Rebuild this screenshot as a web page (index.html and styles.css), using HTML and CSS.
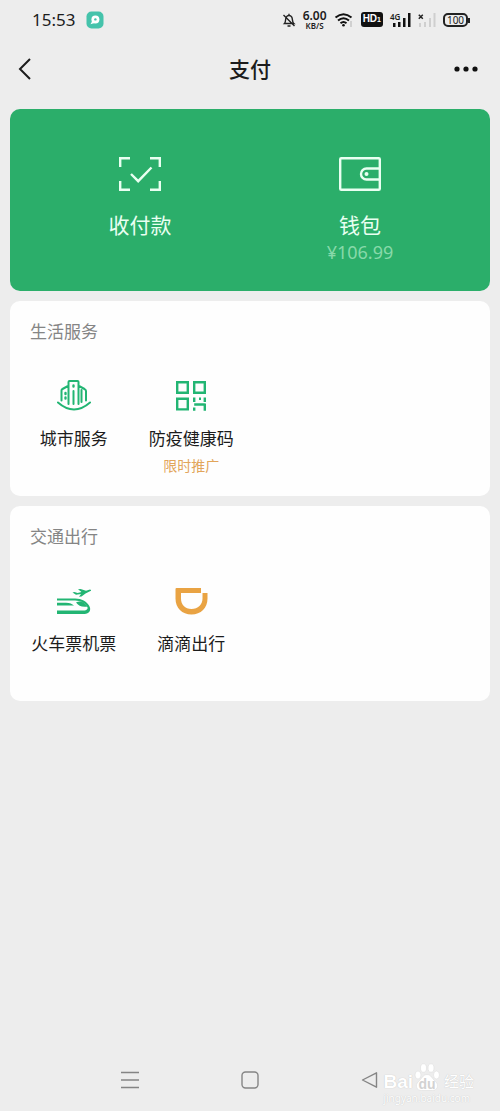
FILE: index.html
```html
<!DOCTYPE html>
<html lang="zh-CN">
<head>
<meta charset="utf-8">
<meta name="viewport" content="width=device-width, initial-scale=1">
<title>支付</title>
<link rel="stylesheet" href="styles.css">
</head>
<body>
<div class="screen">
  <div class="status">
    <time class="clock">15:53</time>
    <svg class="app-badge" width="18" height="18" viewBox="0 0 18 18"><rect x="0.5" y="0.5" width="17" height="17" rx="5" fill="#45c3ab"/><circle cx="9.400" cy="8.400" r="4" fill="#fff"/><path d="M6.500 9.500 4.500 13.200 8.500 12z" fill="#fff"/><circle cx="9.400" cy="8.400" r="1.200" fill="#45c3ab"/></svg>
    <div class="indicators">
      <svg width="14" height="16" viewBox="0 0 14 16" fill="none" stroke="#222" stroke-width="1.400"><path d="M2.500 11.500C4 10 3.200 7 4.200 5.200 5.500 3 8.500 3 9.800 5.200 10.800 7 10 10 11.800 11.500zM7 3.500V1.800M5.500 14h3M1.500 3l11 11"/></svg>
      <div class="speed"><span class="speed-value">6.00</span><span class="speed-unit">KB/S</span></div>
      <svg width="20" height="16" viewBox="0 0 20 16" fill="none" stroke="#111" stroke-width="2"><path d="M1.500 5.500q8-6.500 16 0M4 8.500q5.500-4.500 11 0M6.500 11.200q3-2.500 6 0"/><circle cx="9.500" cy="13.300" r="1.300" fill="#111" stroke="none"/><path d="M17 9v6" stroke="#d0d0d0"/></svg>
      <span class="hd">HD<small>1</small></span>
      <div class="signal">
        <svg width="21" height="16" viewBox="0 0 21 16" fill="#111"><path d="M3 11h2.500v4H3zM8 10h2.500v5H8zM13 6h2.500v9H13zM18 1h2.500v14H18z"/></svg>
        <span class="network">4G</span>
      </div>
      <svg width="18" height="16" viewBox="0 0 18 16"><path d="M1 11h2v4H1zM6 10h2v5H6zM11 6h2v9h-2zM15.500 1h2v14h-2z" fill="#cfcfcf"/><path d="m.8 2.800 4 4m0-4-4 4" stroke="#222" stroke-width="1.500"/></svg>
      <span class="battery">100</span>
    </div>
  </div>

  <header class="header">
    <button class="icon-button" aria-label="返回"><svg width="14" height="24" viewBox="0 0 14 24" fill="none" stroke="#1c1c1c" stroke-width="2"><path d="M12 2 2 12l10 10"/></svg></button>
    <h1 class="title">支付</h1>
    <button class="icon-button more" aria-label="更多"><svg width="24" height="8" viewBox="0 0 24 8" fill="#111"><circle cx="3" cy="4" r="2.600"/><circle cx="12" cy="4" r="2.600"/><circle cx="21" cy="4" r="2.600"/></svg></button>
  </header>

  <main class="content">
    <section class="wallet">
      <button class="wallet-item">
        <svg width="44" height="36" viewBox="0 0 44 36" fill="none" stroke="#e9fff1" stroke-width="2.400"><path d="M2.200 11V2.200H12M32 2.200h9.800V11M41.800 25v8.800H32M12 33.800H2.200V25M13 18l7.200 7.200L33.500 11.500"/></svg>
        <span class="wallet-label">收付款</span>
      </button>
      <button class="wallet-item">
        <svg width="44" height="36" viewBox="0 0 44 36" fill="none" stroke="#e9fff1" stroke-width="2.400"><rect x="2.200" y="2.200" width="39.600" height="31.600" rx="1"/><path d="M41.800 12.500H28.500a5.500 5.500 0 0 0 0 11H41.800"/><circle cx="28.500" cy="18" r="2" fill="#e9fff1" stroke="none"/></svg>
        <span class="wallet-label">钱包</span>
        <span class="balance">¥106.99</span>
      </button>
    </section>

    <section class="card">
      <h2 class="card-title">生活服务</h2>
      <div class="services">
        <button class="service">
          <svg width="36" height="36" viewBox="0 0 36 36" fill="none" stroke="#22b573" stroke-width="2" stroke-linejoin="round" stroke-linecap="round"><path d="M2 23.500q16 14 32 0"/><path d="M5.500 21.500V11.500q0-1 1-1.500l5.500-3M12.500 25V3q0-1 1-1h8q1 0 1 1v22M23 7l5.500 3q1.500 1 1.500 2v9.500M17.500 12v13M25.500 11v12"/><path d="M17.500 6.500v1M9.500 14v1M9.500 18.500v1" stroke-width="2.400"/></svg>
          <span class="service-label">城市服务</span>
        </button>
        <button class="service">
          <svg width="36" height="36" viewBox="0 0 36 36" fill="none" stroke="#22b573" stroke-width="2.400"><path d="M4.200 3.200h10.600v10.600H4.200zM21.200 3.200h10.600v10.600H21.200zM4.200 19.800h10.600v10.600H4.200z"/><path d="M21.200 18.600v4.400M21.200 25.500h10.600M21.200 28.500v3.200M31.800 18.600v4.400M31.800 24.500v7.200M24.500 20v0M26 19.800h2"/></svg>
          <span class="service-label">防疫健康码</span>
          <span class="promo">限时推广</span>
        </button>
      </div>
    </section>

    <section class="card">
      <h2 class="card-title">交通出行</h2>
      <div class="services">
        <button class="service">
          <svg width="36" height="36" viewBox="0 0 36 36" fill="#22b573"><path d="M1 14.500h18c7 0 11.500 3 14 7 3 4.500 0 8.500-4.500 8.500H1v-3.400h26.500c3.500 0 5-1.800 3.500-4-2.500-4-6.500-6-12-6H1z"/><path d="M1 18.800h9c4 0 6 1.200 8 2.700H1zM20 18.500c3-1.500 6-1 8 .5l3.500 3.500c-5 1-9-.5-11.500-4zM16.500 8.500l2-.4 3 .9 4-.9-3.500-2.800 2.500-.4 5.500 1.900 4-1.200q1.500.2 1 1.200l-5.500 2.700-4 3-2.500.3 2-2.800-5 .7z"/></svg>
          <span class="service-label">火车票机票</span>
        </button>
        <button class="service">
          <svg width="36" height="36" viewBox="0 0 36 36" fill="#e9a343"><path d="M3.500 4H28v5H8v5.500c0 6 4 10.500 10.500 10.500S29.500 20.500 29.500 14.500V9H34.500v5.500C34.500 24 28 30.500 18.500 30.500S2.500 24 2.500 14.500V5q0-1 1-1z"/></svg>
          <span class="service-label">滴滴出行</span>
        </button>
      </div>
    </section>
  </main>

  <nav class="system-nav">
    <button class="icon-button" aria-label="最近任务"><svg width="20" height="20" viewBox="0 0 20 20" stroke="#858585" stroke-width="1.400"><path d="M1 2.500h18M1 10h18M1 17.500h18"/></svg></button>
    <button class="icon-button" aria-label="主屏幕"><svg width="20" height="20" viewBox="0 0 20 20" fill="none" stroke="#858585" stroke-width="1.400"><rect x="2" y="2" width="16" height="16" rx="3.500"/></svg></button>
    <button class="icon-button" aria-label="返回上一级"><svg width="20" height="20" viewBox="0 0 20 20" fill="none" stroke="#858585" stroke-width="1.400" stroke-linejoin="round"><path d="M16.500 2.800v14.400L2.500 10z"/></svg></button>
    <div class="watermark">
      <div class="brand">
        <span>Bai</span>
        <span class="paw"><svg width="26" height="30" viewBox="0 0 26 30" fill="#fff" stroke="#dedede" stroke-width=".6"><ellipse cx="4" cy="13" rx="3" ry="4"/><ellipse cx="9.500" cy="6" rx="3" ry="4.200"/><ellipse cx="17" cy="6" rx="3" ry="4.200"/><ellipse cx="22.500" cy="13" rx="3" ry="4"/><path d="M13 12.500c4 0 5 4 8.500 7 4 4 1.500 9-3 9h-11c-5 0-7-5-3-9 3.500-3 4.500-7 8.500-7z"/></svg><span class="du">du</span></span>
        <span class="brand-cn">经验</span>
      </div>
      <span class="site">jingyan.baidu.com</span>
    </div>
  </nav>
</div>
</body>
</html>
```
FILE: styles.css
```css
* { box-sizing: border-box; }

body {
  margin: 0;
  background: #ededed;
  color: #1c1c1c;
  font-family: "Noto Sans", "Noto Sans CJK SC", sans-serif;
}

button {
  padding: 0;
  border: 0;
  background: none;
  color: inherit;
  font: inherit;
  cursor: pointer;
}

svg { display: block; flex: none; }

.screen {
  display: flex;
  flex-direction: column;
  min-height: 100vh;
}

.status {
  display: flex;
  align-items: center;
  gap: 11px;
  height: 39px;
  padding: 0 32px;
}

.clock { font-size: 17px; }

.indicators {
  display: flex;
  align-items: center;
  gap: 7px;
  margin-left: auto;
}

.speed {
  display: flex;
  flex-direction: column;
  align-items: center;
  width: 24px;
  font-weight: 600;
}

.speed-value { font-size: 12px; line-height: 11px; }
.speed-unit { font-size: 8px; line-height: 9px; }

.hd {
  padding: 0 2px;
  border-radius: 3px;
  background: #111;
  color: #fff;
  font-family: "Liberation Sans", sans-serif;
  font-size: 10px;
  font-weight: 700;
  line-height: 14px;
}

.hd small { font-size: 7px; }

.signal { position: relative; }

.network {
  position: absolute;
  top: 0;
  left: 0;
  font-size: 8px;
  font-weight: 600;
  line-height: 9px;
}

.battery {
  position: relative;
  width: 25px;
  border: 2px solid #222;
  border-radius: 5px;
  font-size: 10px;
  line-height: 10px;
  text-align: center;
}

.battery::after {
  content: "";
  position: absolute;
  top: 3px;
  right: -4px;
  width: 2px;
  height: 5px;
  background: #222;
}

.header {
  display: grid;
  grid-template-columns: 1fr auto 1fr;
  align-items: center;
  height: 60px;
  padding: 0 22px 0 18px;
}

.header .icon-button { justify-self: start; min-height: 40px; }
.header .more { justify-self: end; }

.icon-button {
  display: flex;
  align-items: center;
  justify-content: center;
}

.title {
  margin: 0;
  padding-left: 4px;
  font-size: 21px;
  font-weight: 500;
  line-height: 30px;
}

.content {
  display: flex;
  flex-direction: column;
  gap: 10px;
  padding: 10px;
}

.wallet {
  display: grid;
  grid-template-columns: 1fr 1fr;
  min-height: 182px;
  padding: 47px 20px 24px;
  border-radius: 10px;
  background: #2bae6a;
  color: #e9fff1;
}

.wallet-item {
  display: flex;
  flex-direction: column;
  align-items: center;
}

.wallet-label {
  margin-top: 18px;
  font-size: 21px;
  line-height: 30px;
}

.balance {
  color: #87d9a9;
  font-size: 18px;
  line-height: 25px;
}

.card {
  min-height: 195px;
  padding: 20px 5px 19px;
  border-radius: 10px;
  background: #fefefe;
}

.card-title {
  margin: 0 0 36px;
  padding-left: 15px;
  color: #858585;
  font-size: 17px;
  font-weight: 400;
  line-height: 22px;
}

.services {
  display: grid;
  grid-template-columns: repeat(4, 1fr);
}

.service {
  display: flex;
  flex-direction: column;
  align-items: center;
}

.service-label {
  margin-top: 12px;
  font-size: 17px;
  line-height: 24px;
  white-space: nowrap;
}

.promo {
  margin-top: 4px;
  color: #e2a55a;
  font-size: 14px;
  line-height: 22px;
}

.system-nav {
  position: relative;
  display: grid;
  grid-template-columns: repeat(3, 120px);
  justify-content: center;
  height: 62px;
  margin-top: auto;
}

.watermark {
  position: absolute;
  right: 26px;
  bottom: 7px;
  color: #fff;
  text-shadow: 0 0 1px #b8b8b8;
}

.brand {
  display: flex;
  align-items: flex-end;
  gap: 1px;
  font-family: "Liberation Sans", "Noto Sans CJK SC", sans-serif;
  font-size: 19px;
  font-weight: 700;
  line-height: 20px;
}

.paw { position: relative; }

.du {
  position: absolute;
  right: 0;
  bottom: 0;
  left: 0;
  color: #d2d2d2;
  font-size: 14px;
  line-height: 16px;
  text-align: center;
  text-shadow: none;
}

.brand-cn { padding-left: 3px; font-size: 15px; font-weight: 400; }

.site {
  display: block;
  font-size: 10px;
  line-height: 12px;
}
```
